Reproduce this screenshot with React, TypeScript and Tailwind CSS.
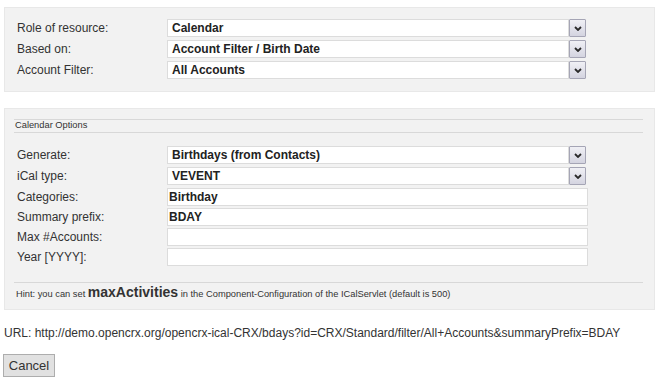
import React from 'react';

function Chevron() {
  return (
    <svg width="8" height="5" viewBox="0 0 8 5" className="block">
      <path d="M1 1 L4 4 L7 1" fill="none" stroke="#2a2a2a" strokeWidth="1.8" />
    </svg>
  );
}

function SelectBox({ value }: { value: string }) {
  return (
    <div className="flex h-[18px] w-[419px] items-stretch">
      <div className="flex flex-1 items-center border border-[#dcdcdc] bg-white pl-[4px] text-[12px] font-bold leading-none text-[#222]">
        {value}
      </div>
      <div className="flex w-[17px] items-center justify-center rounded-[1px] border border-[#a5a5b5] bg-gradient-to-b from-[#f0f0f5] to-[#d4d4e0]">
        <Chevron />
      </div>
    </div>
  );
}

function TextBox({ value }: { value?: string }) {
  return (
    <div className="flex h-[18px] w-[421px] items-center border border-[#dcdcdc] bg-white pl-[1px] text-[12px] font-bold leading-none text-[#222]">
      {value}
    </div>
  );
}

function Row({ label, children }: { label: string; children: React.ReactNode }) {
  return (
    <div className="flex items-center">
      <div className="w-[150px] leading-none">{label}</div>
      {children}
    </div>
  );
}

export default function App() {
  return (
    <div className="bg-white pl-[4px] pr-[3px] pt-[7px] font-['Liberation_Sans',Arial,sans-serif] text-[12px] text-[#333]">
      <div className="h-[85px] border border-[#e8e8e8] bg-[#f2f2f2] pl-[12px] pt-[11px]">
        <div className="flex flex-col gap-[3px]">
          <Row label="Role of resource:">
            <SelectBox value="Calendar" />
          </Row>
          <Row label="Based on:">
            <SelectBox value="Account Filter / Birth Date" />
          </Row>
          <Row label="Account Filter:">
            <SelectBox value="All Accounts" />
          </Row>
        </div>
      </div>

      <div className="mt-[16px] h-[202px] border border-[#e8e8e8] bg-[#f2f2f2] pt-[10px]">
        <div className="ml-[9px] mr-[11px] flex h-[14px] items-center border-y border-[#d8d8d8] pl-[1px] text-[9.3px] leading-none text-[#333]">
          Calendar Options
        </div>
        <div className="mt-[13px] flex flex-col gap-[2px] pl-[12px]">
          <div className="mb-[1px]">
            <Row label="Generate:">
              <SelectBox value="Birthdays (from Contacts)" />
            </Row>
          </div>
          <div className="mb-[1px]">
            <Row label="iCal type:">
              <SelectBox value="VEVENT" />
            </Row>
          </div>
          <Row label="Categories:">
            <TextBox value="Birthday" />
          </Row>
          <Row label="Summary prefix:">
            <TextBox value="BDAY" />
          </Row>
          <Row label="Max #Accounts:">
            <TextBox />
          </Row>
          <Row label="Year [YYYY]:">
            <TextBox />
          </Row>
        </div>
        <div className="ml-[9px] mr-[11px] mt-[16px] flex h-[20px] items-center border-t border-[#d8d8d8] pl-[2px] text-[9.3px] text-[#333]">
          <span>
            Hint: you can set <span className="text-[14px] font-bold">maxActivities</span> in the
            Component-Configuration of the ICalServlet (default is 500)
          </span>
        </div>
      </div>

      <div className="mt-[14px] text-[12px] leading-[18px] text-[#333]">
        URL: http://demo.opencrx.org/opencrx-ical-CRX/bdays?id=CRX/Standard/filter/All+Accounts&amp;summaryPrefix=BDAY
      </div>

      <button
        type="button"
        className="mt-[12px] ml-[-1px] block h-[23px] w-[52px] border border-[#adadad] bg-[#e1e1e1] text-[13px] leading-none text-[#333]"
      >
        Cancel
      </button>
    </div>
  );
}
